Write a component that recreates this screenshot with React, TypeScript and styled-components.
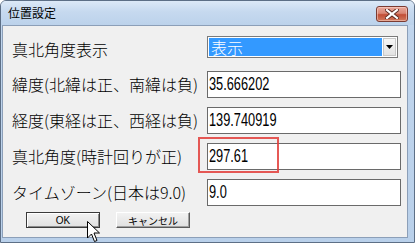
import React from "react";
import styled, {createGlobalStyle} from "styled-components";

const GlobalStyle = createGlobalStyle`
  html, body {
    margin: 0;
    padding: 0;
    background: #ffffff;
    overflow: hidden;
  }
  * {
    box-sizing: border-box;
  }
`

const jpFont = `"Noto Sans CJK JP", "Noto Sans", sans-serif`
const numFont = `"Liberation Sans", "DejaVu Sans", sans-serif`

type RowType = {
  label: string,
  value: string,
}

const rows: RowType[] = [
  {label: '緯度(北緯は正、南緯は負)', value: '35.666202'},
  {label: '経度(東経は正、西経は負)', value: '139.740919'},
  {label: '真北角度(時計回りが正)', value: '297.61'},
  {label: 'タイムゾーン(日本は9.0)', value: '9.0'},
]

const App = () => {
  return (
    <>
      <GlobalStyle/>
      <Window>
        <TitleBar>
          <Title>位置設定</Title>
          <CloseButton>
            <svg width="14" height="10" viewBox="0 0 14 10">
              <path d="M2 1 L12 9 M12 1 L2 9" stroke="#5a2a22" strokeWidth="4" strokeLinecap="square"/>
              <path d="M2 1 L12 9 M12 1 L2 9" stroke="#ffffff" strokeWidth="2.2" strokeLinecap="square"/>
            </svg>
          </CloseButton>
        </TitleBar>
        <Client>
          <Form>
            <Label>真北角度表示</Label>
            <SelectBox>
              <Selected>表示</Selected>
              <ArrowButton>
                <svg width="7" height="4" viewBox="0 0 7 4">
                  <path d="M0 0 H7 L3.5 4 Z" fill="#000"/>
                </svg>
              </ArrowButton>
            </SelectBox>
            {rows.map(r => (
              <React.Fragment key={r.label}>
                <Label $tall>{r.label}</Label>
                <TextBox><Value>{r.value}</Value></TextBox>
              </React.Fragment>
            ))}
          </Form>
          <ButtonRow>
            <DialogButton $default>OK</DialogButton>
            <DialogButton>キャンセル</DialogButton>
          </ButtonRow>
        </Client>
        <Highlight/>
        <Cursor>
          <svg width="14" height="22" viewBox="0 0 14 22">
            <path d="M0.5 0.5 L0.5 17 L4.5 13 L7.5 20.5 L10 19.5 L7 12 L12.5 12 Z"
                  fill="#ffffff" stroke="#000000" strokeWidth="1" strokeLinejoin="miter"/>
          </svg>
        </Cursor>
      </Window>
    </>
  )
}

export default App

const Window = styled.div`
    position: relative;
    width: 415px;
    height: 243px;
    display: flex;
    flex-direction: column;
    border: 1px solid #5d6f86;
    border-radius: 6px 6px 0 0;
    background: linear-gradient(to bottom, #d6e4f4 0%, #c0d5ed 12%, #b9d0ea 100%);
    overflow: hidden;
`

const TitleBar = styled.div`
    height: 24px;
    flex-shrink: 0;
    display: flex;
    align-items: center;
    justify-content: space-between;
    padding: 0 6px 2px 7px;
    background: linear-gradient(to bottom, #dce9f7 0%, #c6d9ef 45%, #bcd2eb 100%);
`

const Title = styled.span`
    font-family: ${jpFont};
    font-size: 12px;
    color: #000;
    padding-top: 1px;
`

const CloseButton = styled.div`
    width: 32px;
    height: 16px;
    margin-top: 3px;
    display: flex;
    align-items: center;
    justify-content: center;
    border: 1px solid #7b3b32;
    border-radius: 3px;
    background: linear-gradient(to bottom, #e9a99c 0%, #d98674 45%, #c24e36 55%, #d07a5e 100%);
    box-shadow: inset 0 0 0 1px rgba(255, 220, 210, 0.5);
`

const Client = styled.div`
    flex: 1;
    margin: 0 6px 4px 1px;
    border: 1px solid #8c9fb8;
    background: #f0f0f0;
    display: flex;
    flex-direction: column;
    padding: 10px 6px 0 9px;
`

const Form = styled.div`
    display: grid;
    grid-template-columns: 195px 194px;
    align-items: center;
`

const Label = styled.div<{ $tall?: boolean }>`
    font-family: ${jpFont};
    font-size: 16px;
    font-weight: 300;
    line-height: 20px;
    color: #000;
    white-space: nowrap;
    margin-top: ${props => props.$tall ? '9px' : '0'};
    padding-bottom: ${props => props.$tall ? '2px' : '0'};
`

const SelectBox = styled.div`
    width: 191px;
    height: 22px;
    display: flex;
    border: 1px solid #7a7a7a;
    background: #fff;
    padding: 1px;
    margin-bottom: 4px;
`

const Selected = styled.div`
    flex: 1;
    background: #3399ff;
    color: #fff;
    font-family: ${jpFont};
    font-size: 16px;
    font-weight: 300;
    line-height: 18px;
    padding-left: 2px;
`

const ArrowButton = styled.div`
    width: 13px;
    margin-left: 1px;
    display: flex;
    align-items: center;
    justify-content: center;
    background: linear-gradient(to bottom, #f6f6f6, #e2e2e2);
    border: 1px solid #c8c8c8;
`

const TextBox = styled.div`
    height: 27px;
    margin-top: 9px;
    border: 1px solid #6a6a6a;
    background: #fff;
    padding: 1px 1px 0;
`

// the dialog's digits are tall and narrow, so squeeze a regular sans sideways
const Value = styled.span`
    display: inline-block;
    font-family: ${numFont};
    font-size: 18px;
    line-height: 22px;
    color: #000;
    transform: scaleX(0.71);
    transform-origin: left center;
`

const ButtonRow = styled.div`
    display: flex;
    gap: 16px;
    margin: 6px 0 0 14px;
`

const DialogButton = styled.div<{ $default?: boolean }>`
    width: 74px;
    height: 16px;
    display: flex;
    align-items: center;
    justify-content: center;
    font-family: "Liberation Sans", ${jpFont};
    font-size: 10px;
    color: #000;
    background: linear-gradient(to bottom, #f2f2f2, #e0e0e0);
    border: 1px solid;
    border-color: ${props => props.$default ? '#3a3a3a' : '#ffffff #5a5a5a #5a5a5a #ffffff'};
    box-shadow: ${props => props.$default
            ? 'inset 1px 1px 0 #fff, inset -1px -1px 0 #8a8a8a'
            : 'inset -1px -1px 0 #a0a0a0'};
`

const Highlight = styled.div`
    position: absolute;
    left: 197px;
    top: 136px;
    width: 81px;
    height: 36px;
    border: 2px solid rgba(226, 60, 56, 0.85);
    pointer-events: none;
`

const Cursor = styled.div`
    position: absolute;
    left: 86px;
    top: 220px;
    line-height: 0;
`
